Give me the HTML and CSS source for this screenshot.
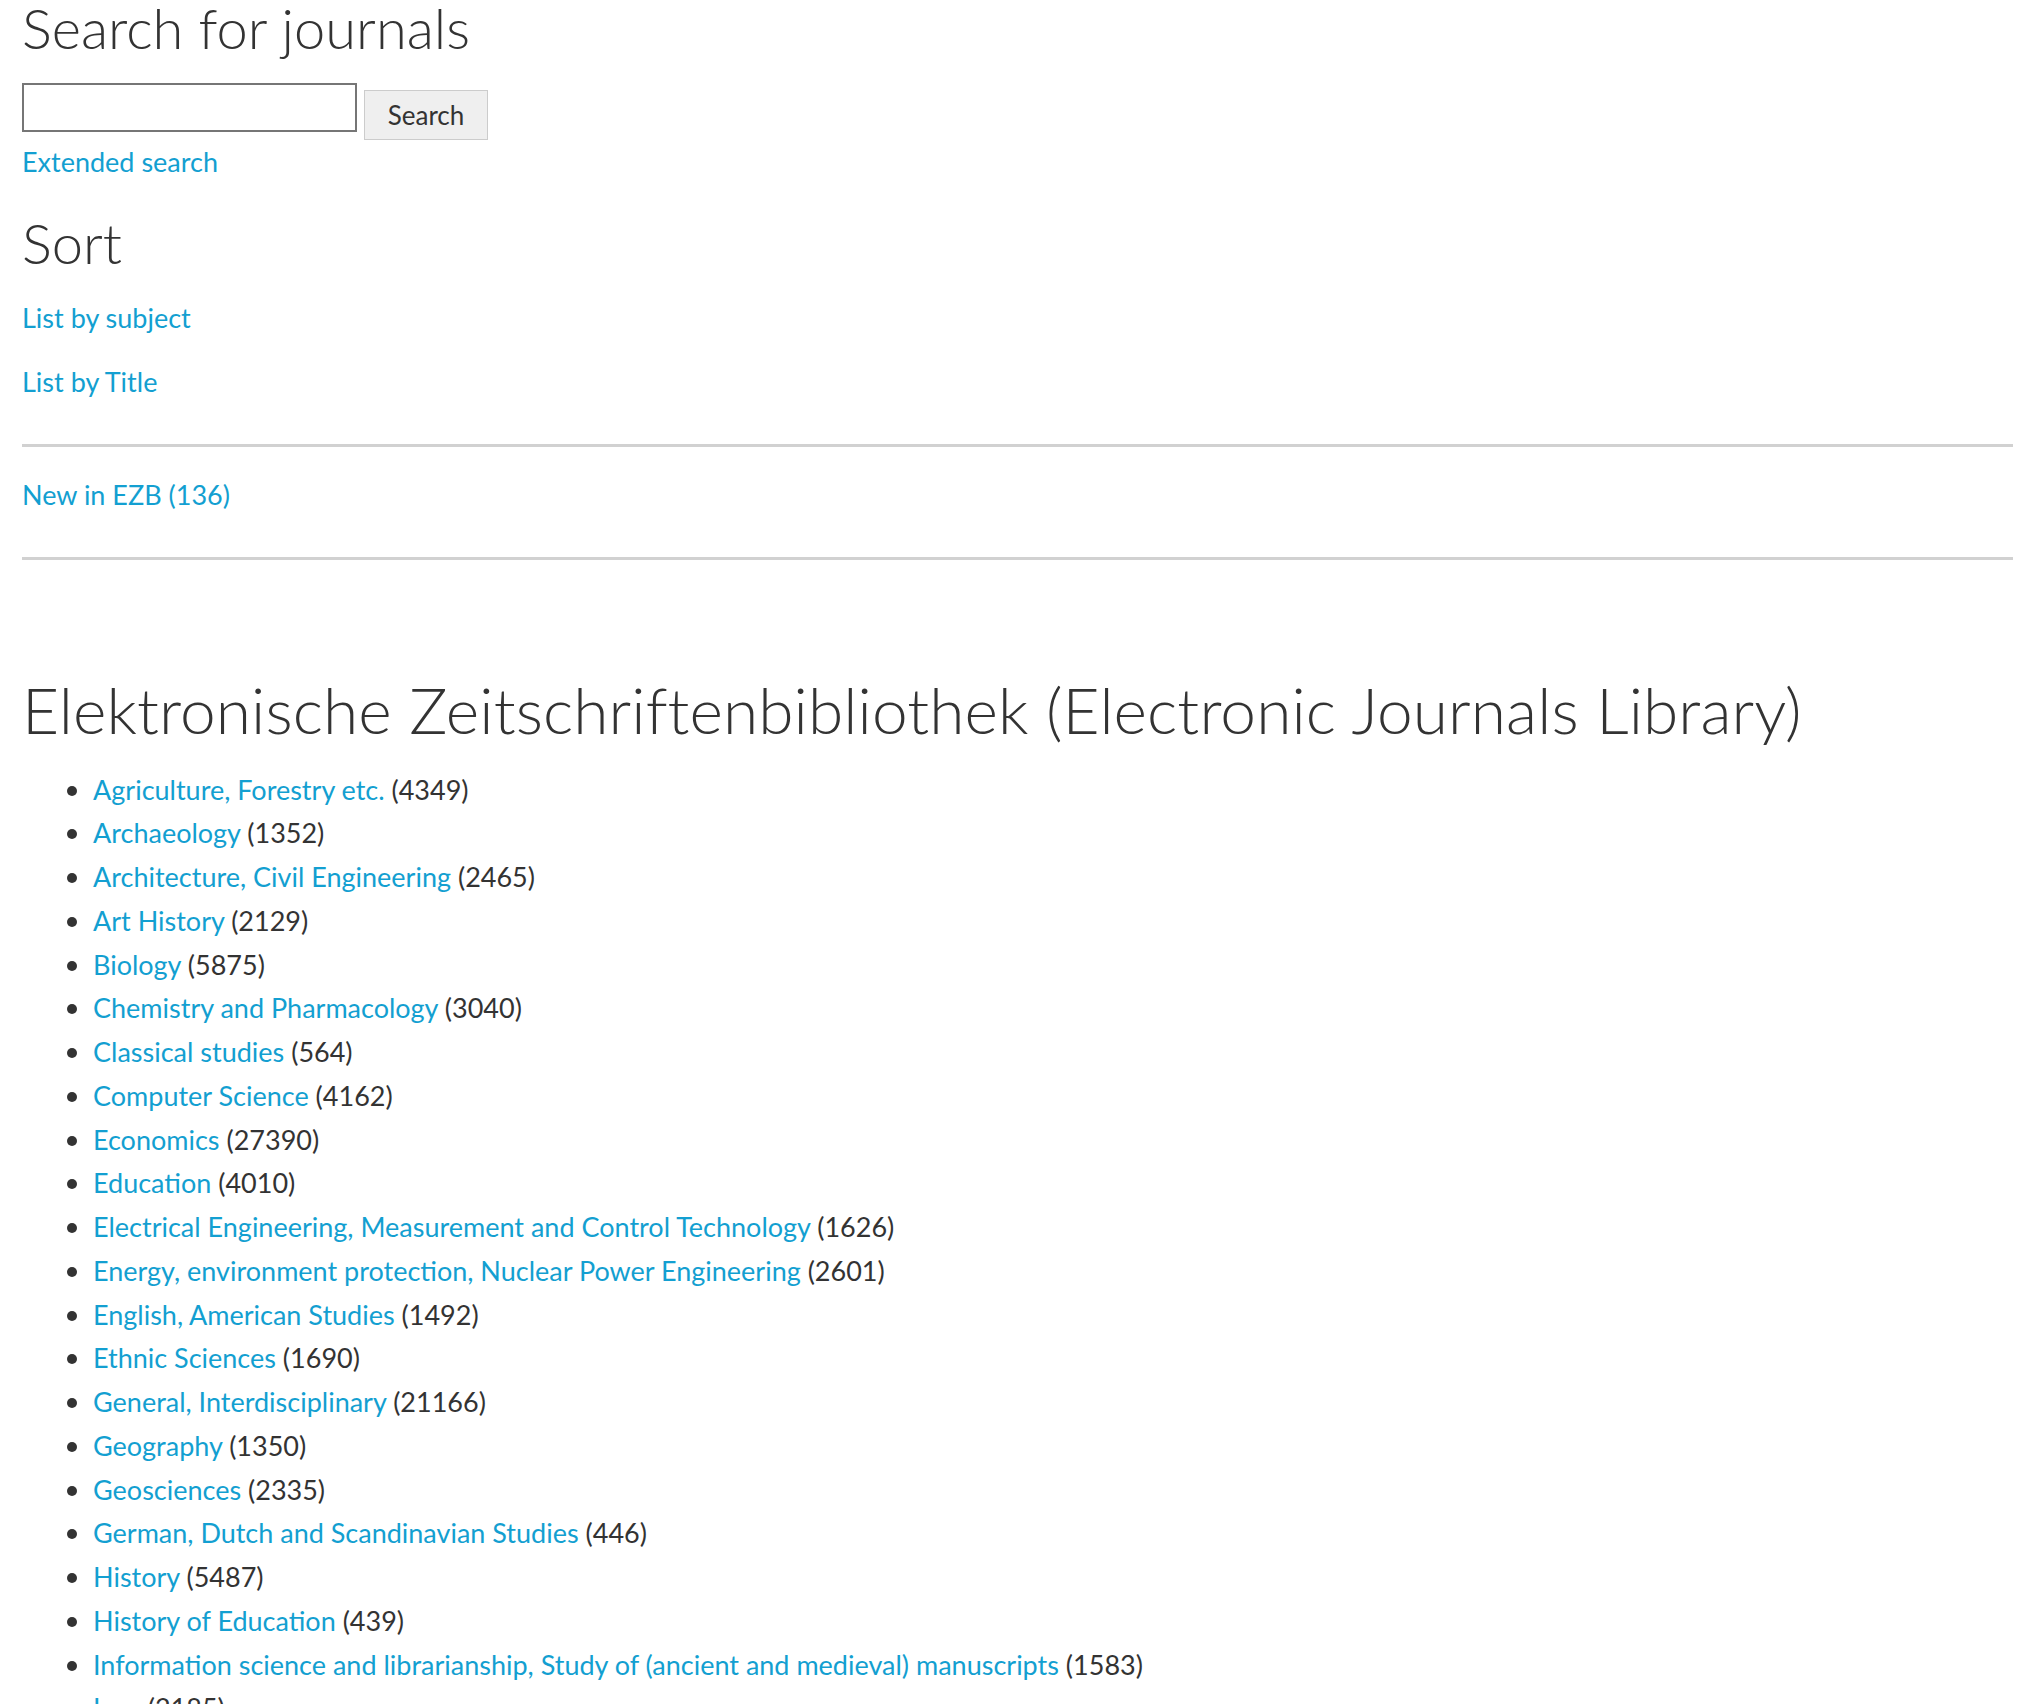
FILE: index.html
```html
<!DOCTYPE html>
<html lang="en">
<head>
<meta charset="utf-8">
<title>Elektronische Zeitschriftenbibliothek</title>
<link rel="stylesheet" href="styles.css">
</head>
<body>
<main class="page">
  <section class="search">
    <h1 class="title">Search for journals</h1>
    <form class="search-form">
      <input class="search-input" type="text" aria-label="Search">
      <button class="search-btn" type="button">Search</button>
    </form>
    <p class="line"><a class="link" href="#">Extended search</a></p>
  </section>

  <section class="sort">
    <h2 class="title sort-title">Sort</h2>
    <p class="line sort-item"><a class="link" href="#">List by subject</a></p>
    <p class="line sort-item"><a class="link" href="#">List by Title</a></p>
  </section>

  <hr class="rule">
  <p class="line new"><a class="link" href="#">New in EZB (136)</a></p>
  <hr class="rule">

  <section class="subjects">
    <h2 class="big-title">Elektronische Zeitschriftenbibliothek (Electronic Journals Library)</h2>
    <ul class="subject-list">
      <li><a class="link" href="#">Agriculture, Forestry etc.</a> (4349)</li>
      <li><a class="link" href="#">Archaeology</a> (1352)</li>
      <li><a class="link" href="#">Architecture, Civil Engineering</a> (2465)</li>
      <li><a class="link" href="#">Art History</a> (2129)</li>
      <li><a class="link" href="#">Biology</a> (5875)</li>
      <li><a class="link" href="#">Chemistry and Pharmacology</a> (3040)</li>
      <li><a class="link" href="#">Classical studies</a> (564)</li>
      <li><a class="link" href="#">Computer Science</a> (4162)</li>
      <li><a class="link" href="#">Economics</a> (27390)</li>
      <li><a class="link" href="#">Education</a> (4010)</li>
      <li><a class="link" href="#">Electrical Engineering, Measurement and Control Technology</a> (1626)</li>
      <li><a class="link" href="#">Energy, environment protection, Nuclear Power Engineering</a> (2601)</li>
      <li><a class="link" href="#">English, American Studies</a> (1492)</li>
      <li><a class="link" href="#">Ethnic Sciences</a> (1690)</li>
      <li><a class="link" href="#">General, Interdisciplinary</a> (21166)</li>
      <li><a class="link" href="#">Geography</a> (1350)</li>
      <li><a class="link" href="#">Geosciences</a> (2335)</li>
      <li><a class="link" href="#">German, Dutch and Scandinavian Studies</a> (446)</li>
      <li><a class="link" href="#">History</a> (5487)</li>
      <li><a class="link" href="#">History of Education</a> (439)</li>
      <li><a class="link" href="#">Information science and librarianship, Study of (ancient and medieval) manuscripts</a> (1583)</li>
      <li><a class="link" href="#">Law</a> (2185)</li>
    </ul>
  </section>
</main>
</body>
</html>
```

FILE: styles.css
```css
html, body {
  margin: 0;
  padding: 0;
  background: #ffffff;
}

body {
  font-family: Lato, "Liberation Sans", sans-serif;
  font-size: 27px;
  line-height: 43.75px;
  color: #333333;
}

.page {
  padding: 0 5px 40px 22px;
}

.link {
  color: #139fd1;
  text-decoration: none;
}

.title {
  margin: 0;
  font-size: 56px;
  line-height: 56px;
  font-weight: 300;
  color: #333333;
  letter-spacing: 0;
}

.search-form {
  display: flex;
  align-items: flex-start;
  margin: 27px 0 0 0;
}

.search-input {
  box-sizing: border-box;
  width: 335px;
  height: 49px;
  margin: 0;
  border: 2px solid #767676;
  background: #ffffff;
  padding: 0 8px;
  font-family: inherit;
  font-size: 27px;
}

.search-btn {
  box-sizing: border-box;
  width: 124px;
  height: 50px;
  margin: 7px 0 0 7px;
  padding: 0;
  border: 1px solid #cccccc;
  background: #efefef;
  color: #333333;
  font-family: inherit;
  font-size: 26px;
  line-height: 48px;
}

.line {
  margin: 0;
}

.sort {
  padding-top: 31px;
}

.sort-title {
  margin-bottom: 25px;
}

.sort-item {
  margin-bottom: 20.7px;
}

.sort-item:last-child {
  margin-bottom: 0;
}

.rule {
  margin: 40px 0 0 0;
  height: 3px;
  border: 0;
  background: #d1d1d1;
}

.new {
  margin-top: 26px;
}

.subjects {
  padding-top: 118px;
}

.big-title {
  margin: 0;
  font-size: 64px;
  line-height: 64px;
  font-weight: 300;
  color: #333333;
  letter-spacing: 0.1px;
}

.subject-list {
  list-style: none;
  margin: 26px 0 0 0;
  padding: 0 0 0 71px;
}

.subject-list li::before {
  content: "";
  display: inline-block;
  width: 10px;
  height: 10px;
  border-radius: 50%;
  background: #333333;
  margin-left: -26px;
  margin-right: 16px;
  vertical-align: 4px;
}
```
